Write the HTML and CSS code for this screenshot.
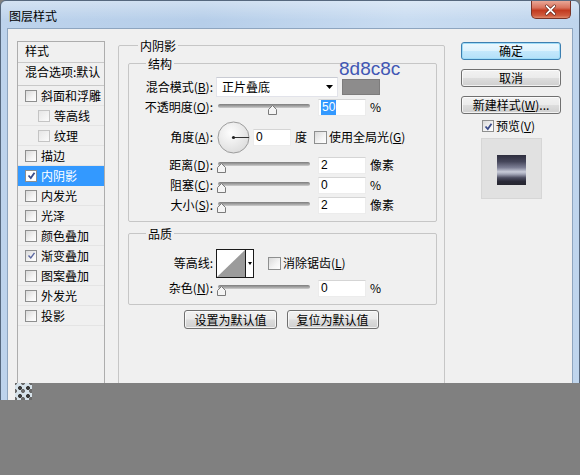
FILE: index.html
```html
<!DOCTYPE html>
<html>
<head>
<meta charset="utf-8">
<title>图层样式</title>
<link rel="stylesheet" href="styles.css">
</head>
<body>
<div class="window">
  <div class="titlebar">
    <span class="title">图层样式</span>
    <span class="close"><svg width="40" height="18" viewBox="0 0 40 18"><path d="M16 5 L24 13 M24 5 L16 13" stroke="#5a1c12" stroke-width="3.2" stroke-linecap="round"/><path d="M16 5 L24 13 M24 5 L16 13" stroke="#fff" stroke-width="2" stroke-linecap="round"/></svg></span>
  </div>
  <div class="client">
    <div class="stylelist">
      <div class="li head h1">样式</div>
      <div class="li head h2">混合选项:默认</div>
      <div class="li"><span class="cb"></span>斜面和浮雕</div>
      <div class="li sub"><span class="cb dim"></span>等高线</div>
      <div class="li sub"><span class="cb dim"></span>纹理</div>
      <div class="li"><span class="cb"></span>描边</div>
      <div class="li sel"><span class="cb"><svg width="9" height="9" viewBox="0 0 9 9"><path d="M1.5 4.5 L3.8 7 L7.5 1.8" fill="none" stroke="#3b4c8a" stroke-width="1.8"/></svg></span>内阴影</div>
      <div class="li"><span class="cb"></span>内发光</div>
      <div class="li"><span class="cb"></span>光泽</div>
      <div class="li"><span class="cb"></span>颜色叠加</div>
      <div class="li"><span class="cb"><svg width="9" height="9" viewBox="0 0 9 9"><path d="M1.5 4.5 L3.8 7 L7.5 1.8" fill="none" stroke="#5a67a0" stroke-width="1.4"/></svg></span>渐变叠加</div>
      <div class="li"><span class="cb"></span>图案叠加</div>
      <div class="li"><span class="cb"></span>外发光</div>
      <div class="li"><span class="cb"></span>投影</div>
    </div>

    <div class="middle">
      <fieldset class="grp outer">
        <legend>内阴影</legend>
        <fieldset class="grp inner struct">
          <legend>结构</legend>
          <div class="row">
            <span class="lbl">混合模式(<u>B</u>):</span>
            <span class="select">正片叠底<svg class="arr" width="7" height="4" viewBox="0 0 7 4"><path d="M0 0 H7 L3.5 4 Z" fill="#000"/></svg></span>
            <span class="swatch"><span class="hex">8d8c8c</span></span>
          </div>
          <div class="row">
            <span class="lbl">不透明度(<u>O</u>):</span>
            <span class="slider"><span class="track"></span><svg class="thumb" style="left:50px" width="9" height="10" viewBox="0 0 9 10"><path d="M4.5 0.5 L8.5 4.5 V9.5 H0.5 V4.5 Z" fill="#f4f4f4" stroke="#7a7a7a"/></svg></span>
            <span class="inp"><span class="hl">50</span></span>
            <span class="unit">%</span>
          </div>
          <div class="row angle">
            <span class="lbl">角度(<u>A</u>):</span>
            <svg class="dial" width="33" height="33" viewBox="0 0 33 33">
              <defs><radialGradient id="dg" cx="0.4" cy="0.35" r="0.7"><stop offset="0" stop-color="#fdfdfd"/><stop offset="1" stop-color="#dcdcdc"/></radialGradient></defs>
              <circle cx="16.5" cy="16.5" r="15.5" fill="url(#dg)" stroke="#9c9c9c"/>
              <line x1="16.5" y1="16.5" x2="32" y2="16.5" stroke="#333" stroke-width="1"/>
              <circle cx="16.5" cy="16.5" r="1.6" fill="#222"/>
            </svg>
            <span class="inp ang">0</span>
            <span class="unit">度</span>
            <span class="cb gl"></span>
            <span class="cbtext">使用全局光(<u>G</u>)</span>
          </div>
          <div class="row">
            <span class="lbl">距离(<u>D</u>):</span>
            <span class="slider"><span class="track"></span><svg class="thumb" style="left:-1px" width="9" height="10" viewBox="0 0 9 10"><path d="M4.5 0.5 L8.5 4.5 V9.5 H0.5 V4.5 Z" fill="#f4f4f4" stroke="#7a7a7a"/></svg></span>
            <span class="inp">2</span>
            <span class="unit">像素</span>
          </div>
          <div class="row">
            <span class="lbl">阻塞(<u>C</u>):</span>
            <span class="slider"><span class="track"></span><svg class="thumb" style="left:-1px" width="9" height="10" viewBox="0 0 9 10"><path d="M4.5 0.5 L8.5 4.5 V9.5 H0.5 V4.5 Z" fill="#f4f4f4" stroke="#7a7a7a"/></svg></span>
            <span class="inp">0</span>
            <span class="unit">%</span>
          </div>
          <div class="row">
            <span class="lbl">大小(<u>S</u>):</span>
            <span class="slider"><span class="track"></span><svg class="thumb" style="left:-1px" width="9" height="10" viewBox="0 0 9 10"><path d="M4.5 0.5 L8.5 4.5 V9.5 H0.5 V4.5 Z" fill="#f4f4f4" stroke="#7a7a7a"/></svg></span>
            <span class="inp">2</span>
            <span class="unit">像素</span>
          </div>
        </fieldset>

        <fieldset class="grp inner quality">
          <legend>品质</legend>
          <div class="row contour">
            <span class="lbl">等高线:</span>
            <svg class="picker" width="38" height="29" viewBox="0 0 38 29">
              <rect x="0.5" y="0.5" width="37" height="28" fill="#fff" stroke="#1a1a1a"/>
              <polygon points="1,28 29,1 29,28" fill="#9b9b9b"/>
              <line x1="29.5" y1="0" x2="29.5" y2="29" stroke="#1a1a1a"/>
              <polygon points="32,13 36,13 34,16" fill="#000"/>
            </svg>
            <span class="cb aa"></span>
            <span class="cbtext">消除锯齿(<u>L</u>)</span>
          </div>
          <div class="row noise">
            <span class="lbl">杂色(<u>N</u>):</span>
            <span class="slider"><span class="track"></span><svg class="thumb" style="left:-1px" width="9" height="10" viewBox="0 0 9 10"><path d="M4.5 0.5 L8.5 4.5 V9.5 H0.5 V4.5 Z" fill="#f4f4f4" stroke="#7a7a7a"/></svg></span>
            <span class="inp">0</span>
            <span class="unit">%</span>
          </div>
        </fieldset>

        <div class="btnrow">
          <button class="btn wide">设置为默认值</button>
          <button class="btn wide">复位为默认值</button>
        </div>
      </fieldset>
    </div>

    <div class="right">
      <button class="btn side default">确定</button>
      <button class="btn side">取消</button>
      <button class="btn side">新建样式(<u>W</u>)...</button>
      <div class="preview-check">
        <span class="cb"><svg width="9" height="9" viewBox="0 0 9 9"><path d="M1.5 4.5 L3.8 7 L7.5 1.8" fill="none" stroke="#3b4c8a" stroke-width="1.8"/></svg></span>
        <span class="cbtext">预览(<u>V</u>)</span>
      </div>
      <div class="preview"><div class="swatch-prev"></div></div>
    </div>
  </div>

  <div class="shade shade-a"></div>
  <div class="shade shade-b"></div>
  <div class="grip"></div>
</div>
</body>
</html>
```

FILE: styles.css
```css
* { box-sizing: border-box; }
html, body { margin: 0; padding: 0; }
body {
  width: 580px;
  height: 475px;
  overflow: hidden;
  background: #808080;
  font-family: "Noto Sans CJK SC", "Noto Sans", sans-serif;
  font-size: 12px;
  color: #000;
}
u { text-decoration: underline; text-underline-offset: 1px; }

.window {
  position: relative;
  width: 580px;
  height: 475px;
  display: flex;
  flex-direction: column;
  background: linear-gradient(to right, #bdd3ec 0%, #b6cee9 35%, #c9dcf1 70%, #bfd5ed 100%);
  border: 1px solid #56687e;
  border-radius: 6px 6px 0 0;
}

.titlebar {
  height: 27px;
  flex: none;
  display: flex;
  align-items: flex-start;
  padding-left: 8px;
  background: linear-gradient(to bottom, rgba(255,255,255,0.35), rgba(255,255,255,0) 70%);
  border-radius: 5px 5px 0 0;
}
.title { margin-top: 7px; line-height: 16px; }
.close {
  margin-left: auto;
  margin-right: 8px;
  width: 40px;
  height: 18px;
  border: 1px solid #7a3326;
  border-top: 0;
  border-radius: 0 0 5px 5px;
  background: linear-gradient(to bottom, #e9a796 0%, #d8725c 40%, #c23a1f 55%, #cf5a3d 85%, #e08a6c 100%);
  display: flex;
  overflow: hidden;
}
.close svg { display: block; margin-left: -1px; }

.client {
  flex: 1;
  margin: 0 6px;
  border: 1px solid #8ea5bf;
  border-bottom: 0;
  background: #f0f0f0;
  display: flex;
  align-items: flex-start;
  padding-left: 9px;
}

/* left style list */
.stylelist {
  width: 88px;
  margin-top: 12px;
  margin-right: 13px;
  align-self: stretch;
  border: 1px solid #adadad;
  border-bottom: 0;
  background: #f0f0f0;
}
.li {
  height: 20px;
  display: flex;
  align-items: center;
  padding-left: 7px;
  line-height: 16px;
  border-bottom: 1px solid #e4e4e4;
  white-space: nowrap;
}
.li .cb { margin-right: 4px; width: 12px; height: 12px; }
.li.sub { padding-left: 20px; }
.li.head { align-items: flex-start; padding-top: 1px; border-bottom-color: #c9c9c9; }
.li.h1 { height: 21px; }
.li.h2 { height: 23px; }
.li.sel { background: #3399ff; color: #fff; border-bottom-color: #3399ff; }

.cb {
  width: 13px;
  height: 13px;
  flex: none;
  border: 1px solid #8e8f8f;
  background: linear-gradient(135deg, #d9d9d9 0%, #f4f4f4 60%, #ffffff 100%);
  display: inline-flex;
  align-items: center;
  justify-content: center;
}
.cb.dim { border-color: #c4c4c4; background: linear-gradient(135deg, #e6e6e6, #fbfbfb); }
.sel .cb { background: #fff; border-color: #8e8f8f; }

/* middle */
.middle { width: 327px; margin-top: 9px; }
.grp {
  margin: 0;
  padding: 0;
  border: 1px solid #c6c6c6;
  border-radius: 2px;
  min-width: 0;
}
.grp legend {
  padding: 0 2px;
  line-height: 15px;
  height: 15px;
}
.outer { min-height: 380px; }
.outer > legend { margin-left: 19px; }
.inner { margin: 3px 7px 0 9px; }
.inner > legend { margin-left: 17px; }
.struct { padding: 6px 0 6px 0; }
.quality { margin-top: 4px; padding: 8px 0 6px 0; }

.row {
  height: 20px;
  display: flex;
  align-items: center;
  white-space: nowrap;
  line-height: 16px;
}
.row.angle { height: 36px; margin-top: 2px; }
.row.contour { height: 28px; }
.row.noise { margin-top: 1px; }
.lbl { width: 84px; text-align: right; flex: none; }

.select {
  position: relative;
  margin-left: 3px;
  width: 122px;
  height: 20px;
  background: #fff;
  border: 1px solid #e2e3ea;
  border-top-color: #c9cbd3;
  display: flex;
  align-items: center;
  padding-left: 5px;
}
.select .arr { margin-left: auto; margin-right: 4px; }
.swatch {
  position: relative;
  margin-left: 4px;
  width: 38px;
  height: 16px;
  background: #8d8c8c;
  border: 1px solid #7d7c7c;
}
.hex {
  position: absolute;
  left: -4px;
  top: -21px;
  font-family: "Liberation Sans", Arial, sans-serif;
  font-size: 19px;
  line-height: 19px;
  color: #4157b4;
}

.slider {
  position: relative;
  margin-left: 5px;
  width: 92px;
  height: 12px;
  flex: none;
}
.track {
  display: block;
  margin-top: 3px;
  height: 4px;
  border-radius: 2px;
  background: linear-gradient(to bottom, #7c7c7c, #a9a9a9 60%, #cfcfcf);
}
.thumb { position: absolute; top: 4px; }

.inp {
  margin-left: 8px;
  width: 48px;
  height: 17px;
  flex: none;
  background: #fff;
  border: 1px solid #ececec;
  border-top-color: #d5d5d5;
  padding-left: 2px;
  font-family: "Liberation Sans", Arial, sans-serif;
  font-size: 12px;
  line-height: 15px;
  display: flex;
  align-items: center;
}
.inp.ang { margin-left: 3px; width: 38px; }
.hl { background: #3399ff; color: #fff; padding: 0 1px; line-height: 15px; }
.unit { margin-left: 4px; }
.dial { margin-left: 4px; flex: none; }
.cb.gl { margin-left: 7px; }
.cbtext { margin-left: 2px; }
.picker { margin-left: 3px; flex: none; }
.cb.aa { margin-left: 14px; }

.btnrow {
  display: flex;
  justify-content: center;
  gap: 10px;
  margin-top: 5px;
}

.btn {
  display: block;
  margin: 0;
  padding: 0;
  font-family: "Noto Sans CJK SC", "Noto Sans", sans-serif;
  font-size: 12px;
  line-height: 16px;
  color: #000;
  border: 1px solid #707070;
  border-radius: 3px;
  background: linear-gradient(to bottom, #f2f2f2 0%, #ebebeb 48%, #dddddd 52%, #cfcfcf 100%);
  box-shadow: inset 0 0 0 1px rgba(255,255,255,0.7);
  text-align: center;
}
.btn.wide { height: 19px; padding: 0 9px; }

/* right */
.right {
  width: 100px;
  margin-left: 16px;
  margin-top: 13px;
  display: flex;
  flex-direction: column;
}
.btn.side { width: 100px; height: 18px; }
.btn.side + .btn.side { margin-top: 9px; }
.btn.side:nth-child(3) { margin-top: 8px; }
.btn.default {
  border-color: #3c7fb1;
  background: linear-gradient(to bottom, #edf8fe 0%, #ddf2fd 48%, #c4e8fc 52%, #b3e0f9 100%);
  box-shadow: inset 0 0 0 1px #9fdcf7;
}
.preview-check {
  display: flex;
  align-items: center;
  height: 14px;
  margin-top: 5px;
  margin-left: 21px;
  line-height: 14px;
}
.preview-check .cb { width: 12px; height: 12px; }
.preview {
  margin-top: 5px;
  margin-left: 20px;
  width: 61px;
  height: 61px;
  background: #e1e1e1;
  border: 1px solid #d6d6d6;
  padding: 16px 0 0 15px;
}
.swatch-prev {
  width: 29px;
  height: 30px;
  background: linear-gradient(to bottom, #2e2e3e 0%, #45465a 22%, #7d7f95 42%, #c9ccd9 56%, #a2a5b6 64%, #4c4d60 76%, #2a2a38 88%, #26262f 100%);
}

/* overlay shade at the bottom of the screenshot */
.shade { position: absolute; background: #808080; }
.shade-a { left: 31px; top: 382px; right: -1px; bottom: -1px; }
.shade-b { left: -1px; top: 399px; width: 33px; bottom: -1px; }
.grip {
  position: absolute;
  left: 14px;
  top: 382px;
  width: 17px;
  height: 17px;
  background:
    radial-gradient(circle, #3a3a3a 30%, transparent 40%) 1px 1px / 8px 8px,
    radial-gradient(circle, #6a6a6a 30%, transparent 40%) 4px 4px / 8px 8px,
    #d6e2ea;
}
```
